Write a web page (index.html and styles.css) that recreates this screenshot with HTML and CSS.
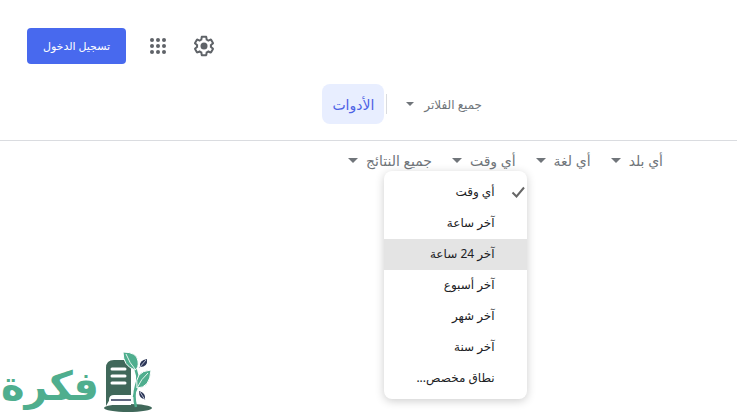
FILE: index.html
```html
<!DOCTYPE html>
<html lang="ar" dir="rtl">
<head>
    <meta charset="UTF-8">
    <meta name="viewport" content="width=device-width, initial-scale=1.0">
    <title>أدوات البحث</title>
    <link rel="stylesheet" href="styles.css">
</head>
<body>
    <header class="topbar">
        <button type="button" class="icon-button" aria-label="الإعدادات">
            <svg width="24" height="24" viewBox="0 0 24 24" fill="#5f6368">
                <path d="M13.85 22.25h-3.7c-.74 0-1.36-.54-1.45-1.27l-.27-1.89c-.27-.14-.53-.29-.79-.46l-1.8.72c-.7.26-1.47-.03-1.81-.65L2.2 15.53c-.35-.66-.2-1.44.36-1.88l1.53-1.19c-.01-.15-.02-.3-.02-.46 0-.15.01-.31.02-.46l-1.52-1.19c-.59-.45-.74-1.26-.37-1.88l1.85-3.19c.34-.62 1.11-.9 1.79-.63l1.81.73c.26-.17.52-.32.78-.46l.27-1.91c.09-.7.71-1.25 1.44-1.25h3.7c.74 0 1.36.54 1.45 1.27l.27 1.89c.27.14.53.29.79.46l1.8-.72c.71-.26 1.48.03 1.82.65l1.84 3.18c.36.66.2 1.44-.36 1.88l-1.52 1.19c.01.15.02.3.02.46s-.01.31-.02.46l1.52 1.19c.56.45.72 1.23.37 1.86l-1.86 3.22c-.34.62-1.11.9-1.8.63l-1.8-.72c-.26.17-.52.32-.78.46l-.27 1.91c-.1.68-.72 1.22-1.46 1.22zm-3.23-2h2.76l.37-2.55.53-.22c.44-.18.88-.44 1.34-.78l.45-.34 2.38.96 1.38-2.4-2.03-1.58.07-.56c.03-.26.06-.51.06-.78s-.03-.53-.06-.78l-.07-.56 2.03-1.58-1.39-2.4-2.39.96-.45-.35c-.42-.32-.87-.58-1.33-.77l-.52-.22-.37-2.55h-2.76l-.37 2.55-.53.21c-.44.19-.88.44-1.34.79l-.45.33-2.38-.95-1.39 2.39 2.03 1.58-.07.56a7 7 0 0 0-.06.79c0 .26.02.53.06.78l.07.56-2.03 1.58 1.38 2.4 2.39-.96.45.35c.43.33.86.58 1.33.77l.53.22.38 2.55z"/>
                <circle cx="12" cy="12" r="3.5"/>
            </svg>
        </button>
        <button type="button" class="icon-button" aria-label="التطبيقات">
            <svg width="24" height="24" viewBox="0 0 24 24" fill="#5f6368">
                <circle cx="6" cy="6" r="2"/><circle cx="12" cy="6" r="2"/><circle cx="18" cy="6" r="2"/>
                <circle cx="6" cy="12" r="2"/><circle cx="12" cy="12" r="2"/><circle cx="18" cy="12" r="2"/>
                <circle cx="6" cy="18" r="2"/><circle cx="12" cy="18" r="2"/><circle cx="18" cy="18" r="2"/>
            </svg>
        </button>
        <a href="#" class="sign-in">تسجيل الدخول</a>
    </header>

    <div class="filters">
        <button type="button" class="dropdown small">جميع الفلاتر</button>
        <button type="button" class="tools-button">الأدوات</button>
    </div>

    <div class="tools">
        <button type="button" class="dropdown">أي بلد</button>
        <button type="button" class="dropdown">أي لغة</button>
        <div class="menu-wrap">
            <button type="button" class="dropdown" aria-expanded="true">أي وقت</button>
            <div class="menu">
                <button type="button" class="menu-item">
                    <svg class="check" width="14" height="12" viewBox="0 0 14 12" fill="none" stroke="#666" stroke-width="2">
                        <path d="M1.5 6.5l4 4L13 1.5"/>
                    </svg>
                    أي وقت
                </button>
                <button type="button" class="menu-item">آخر ساعة</button>
                <button type="button" class="menu-item active">آخر 24 ساعة</button>
                <button type="button" class="menu-item">آخر أسبوع</button>
                <button type="button" class="menu-item">آخر شهر</button>
                <button type="button" class="menu-item">آخر سنة</button>
                <button type="button" class="menu-item">نطاق مخصص...</button>
            </div>
        </div>
        <button type="button" class="dropdown">جميع النتائج</button>
    </div>

    <footer class="brand">
        <svg width="50" height="61" viewBox="0 0 50 61">
            <ellipse cx="25" cy="56" rx="24" ry="4" fill="#40685a"/>
            <path d="M3 54V16q0-8 8-8h17v36H12q-4 0-5 3z" fill="#40685a"/>
            <path d="M28 43H11q-5 0-5 5t5 5h17z" fill="#fff"/>
            <path d="M8 48h20" stroke="#2b3556" stroke-width="1.5"/>
            <path d="M9 17h13M9 24h13M9 31h13" stroke="#fff" stroke-width="3" stroke-linecap="round"/>
            <path d="M33 55Q30 44 33 34Q37 24 30 12M31 45Q32 33 43 24" fill="none" stroke="#4fae8e" stroke-width="2.5"/>
            <path d="M20 0Q34 0 35 9Q36 16 32 18Q20 14 20 0z" fill="#4fae8e" stroke="#fff"/>
            <path d="M48 18Q47 36 34 36Q31 19 48 18z" fill="#4fae8e" stroke="#fff"/>
            <path d="M23 2Q27 12 32 17M45 21Q38 27 34 36" fill="none" stroke="#e7f5ef"/>
            <path d="M44 7Q45 15 37 15Q36 8 44 7zM36 39Q43 41 42 47Q36 47 36 39z" fill="#2b3556"/>
            <path d="M43 8L36 16M37 40l5 8" stroke="#b9bfd0" stroke-width="1"/>
        </svg>
        <span class="brand-name">فكرة</span>
    </footer>
</body>
</html>
```
FILE: styles.css
```css
* {
    box-sizing: border-box;
}
body {
    margin: 0;
    min-height: 100vh;
    display: flex;
    flex-direction: column;
    background-color: #fff;
    font-family: "Noto Sans", "DejaVu Sans", sans-serif;
    color: #202124;
}
button {
    border: none;
    background: none;
    padding: 0;
    margin: 0;
    font: inherit;
    color: inherit;
    cursor: pointer;
}
.topbar {
    display: flex;
    justify-content: flex-end;
    align-items: center;
    gap: 18px;
    padding: 28px 0 20px 27px;
}
.icon-button {
    width: 28px;
    height: 24px;
}
.icon-button svg {
    display: block;
    margin: 0 auto;
}
.sign-in {
    width: 99px;
    height: 36px;
    line-height: 36px;
    border-radius: 4px;
    background-color: #4869ee;
    color: #fff;
    font-size: 11px;
    text-align: center;
    text-decoration: none;
    white-space: nowrap;
}
.filters {
    display: flex;
    align-items: center;
    padding: 0 255px 16px 0;
    border-bottom: 1px solid #dadce0;
}
.dropdown {
    display: flex;
    align-items: center;
    gap: 8px;
    height: 24px;
    font-size: 14px;
    color: #70757a;
    white-space: nowrap;
}
.dropdown::after {
    content: "";
    border: 5px solid transparent;
    border-top-color: #70757a;
    border-bottom: none;
}
.small {
    font-size: 12px;
    gap: 10px;
}
.small::after {
    border-width: 4px 4px 0;
}
.tools-button {
    position: relative;
    margin-right: 22px;
    height: 40px;
    padding: 0 10px;
    border-radius: 8px;
    background-color: #e8eeff;
    color: #4d62e5;
    font-size: 14px;
}
.tools-button::before {
    content: "";
    position: absolute;
    right: -3px;
    top: 10px;
    height: 20px;
    border-left: 1px solid #dadce0;
}
.tools {
    display: flex;
    gap: 20px;
    padding: 7px 74px 0 0;
}
.menu-wrap {
    position: relative;
}
.menu {
    position: absolute;
    top: 23px;
    right: -11px;
    width: 143px;
    padding: 6px 0 5px;
    border-radius: 8px;
    background-color: #fff;
    box-shadow: 0 2px 10px rgba(0,0,0,0.2);
}
.menu-item {
    position: relative;
    display: block;
    width: 100%;
    height: 31px;
    padding: 0 32px 2px 0;
    font-size: 12px;
    text-align: right;
    white-space: nowrap;
}
.active {
    background-color: #e4e4e4;
}
.check {
    position: absolute;
    right: 2px;
    top: 9px;
}
.brand {
    display: flex;
    justify-content: flex-end;
    align-items: flex-end;
    gap: 4px;
    margin-top: auto;
    padding-left: 1px;
}
.brand-name {
    color: #4fae8e;
    font-family: "DejaVu Sans", sans-serif;
    font-size: 40px;
    font-weight: bold;
    line-height: 54px;
}
```
